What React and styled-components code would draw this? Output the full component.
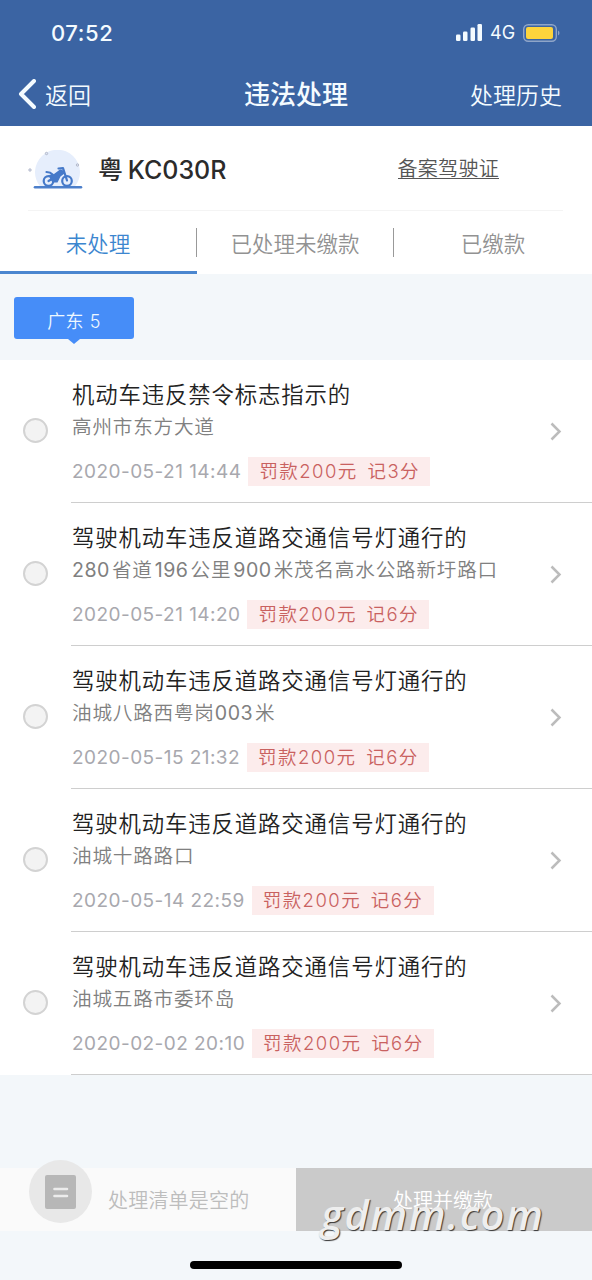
import React from 'react'
import styled, { createGlobalStyle } from 'styled-components'

const GlobalStyle = createGlobalStyle`
    * {
        box-sizing: border-box;
    }

    body {
        margin: 0;
        background: #f3f7fa;
        font-family: Inter, 'Noto Sans CJK SC', sans-serif;
        font-weight: 350;
    }
`

const Screen = styled.div`
    width: 592px;
    height: 1280px;
    display: flex;
    flex-direction: column;
    overflow: hidden;
    white-space: nowrap;
`

const Header = styled.header`
    height: 126px;
    background: #3b64a3;
    color: #f4fbff;
`

const StatusBar = styled.div`
    height: 64px;
    padding: 1px 32px 0 51px;
    display: flex;
    align-items: center;
    justify-content: space-between;
`

const Clock = styled.span`
    font-size: 22px;
    font-weight: 500;
    letter-spacing: 0.6px;
`

const StatusIcons = styled.div`
    display: flex;
    align-items: center;
`

const Network = styled.span`
    margin: 0 7px 0 8px;
    width: 26px;
    font-size: 18px;
    font-weight: 400;
`

const NavBar = styled.nav`
    height: 60px;
    padding: 0 30px 0 18px;
    display: grid;
    grid-template-columns: 1fr auto 1fr;
    align-items: center;
    font-size: 23px;
`

const Back = styled.div`
    display: flex;
    align-items: center;
    gap: 9px;
`

const NavTitle = styled.h1`
    margin: -3px 0 0 12px;
    font-size: 26px;
    font-weight: 500;
`

const History = styled.span`
    text-align: right;
`

const Vehicle = styled.section`
    height: 85px;
    padding: 0 29px 0 28px;
    background: #ffffff;
`

const VehicleRow = styled.div`
    height: 100%;
    padding: 0 64px 0 0;
    display: flex;
    align-items: center;
    border-bottom: 1px solid #f4f4f4;

    svg {
        margin-top: 3px;
    }
`

const Plate = styled.span`
    margin-left: 15px;
    flex: 1;
    font-size: 25px;
    font-weight: 450;
    color: #2b2b2b;
    word-spacing: -2px;
`

const License = styled.a`
    margin-top: 2px;
    font-size: 20px;
    letter-spacing: 0.3px;
    color: #555555;
    border-bottom: 1px solid #555555;
    line-height: 21px;
    height: 20px;
`

const Tabs = styled.div`
    height: 63px;
    display: grid;
    grid-template-columns: 197px 197px 198px;
    background: #ffffff;
`

const Tab = styled.div`
    display: flex;
    align-items: center;
    border-bottom: 3px solid ${props => props.$active ? '#4a86cf' : 'transparent'};
    color: ${props => props.$active ? '#3c86cf' : '#929292'};
    font-size: 21.5px;

    span {
        flex: 1;
        height: 29px;
        line-height: 32px;
        margin-top: 3px;
        text-align: center;
        border-right: 1px solid #999999;
    }

    &:last-child span {
        border-right: 0;
    }
`

const Regions = styled.div`
    height: 86px;
    padding: 23px 14px 0;
`

const Region = styled.div`
    width: 120px;
    height: 42px;
    position: relative;
    border-radius: 3px;
    background: #468df8;
    color: #eef8ff;
    font-size: 18px;
    letter-spacing: 0.5px;
    line-height: 49px;
    text-align: center;

    &::after {
        content: '';
        position: absolute;
        left: 54px;
        top: 42px;
        border: 6px solid transparent;
        border-top: 5px solid #468df8;
        border-bottom: 0;
    }
`

const Row = styled.div`
    height: 143px;
    padding-left: 23px;
    display: flex;
    background: #ffffff;
`

const Radio = styled.span`
    width: 25px;
    height: 25px;
    margin: 58px 23px 0 0;
    border: 2px solid #d3d3d3;
    border-radius: 50%;
    background: #f3f3f3;
`

const RowBody = styled.div`
    flex: 1;
    padding: 20px 30px 0 1px;
    display: flex;
    justify-content: space-between;
    border-bottom: 1px solid #cecece;

    svg {
        margin-top: 42px;
    }
`

const Title = styled.div`
    height: 30px;
    line-height: 30px;
    font-size: 22.4px;
    letter-spacing: 0.87px;
    color: #222222;
`

const Place = styled.div`
    height: 32px;
    line-height: 34px;
    font-size: 19.6px;
    letter-spacing: 0.8px;
    color: #808080;
`

const Digits = styled.span`
    margin: 0 2px;
    font-weight: 400;
    letter-spacing: 0.5px;

    &:first-child {
        margin-left: 0;
    }
`

const Meta = styled.div`
    margin-top: 15px;
    height: 29px;
    display: flex;
    align-items: center;
    gap: 7px;
`

const Time = styled.span`
    font-size: 19px;
    font-weight: 400;
    letter-spacing: 0.45px;
    color: #a8a8ae;
`

const Fine = styled.span`
    width: 182px;
    height: 29px;
    line-height: 29px;
    padding-left: 11px;
    background: #fcecec;
    color: #c9615f;
    font-size: 18.5px;
    letter-spacing: 1.45px;
    word-spacing: 3px;
`

const Footer = styled.footer`
    height: 63px;
    margin-top: 93px;
    display: grid;
    grid-template-columns: 1fr 1fr;
    grid-template-rows: 63px;
    background: #fafafa;
    font-size: 20px;
`

const Basket = styled.div`
    padding: 0 0 0 29px;
    display: flex;
    gap: 16px;
    color: #bdbdbd;
    line-height: 66px;
    letter-spacing: 0.2px;

    svg {
        flex: none;
        margin-top: -8px;
    }
`

const PayButton = styled.div`
    position: relative;
    padding-right: 2px;
    background: #cacaca;
    color: #ffffff;
    line-height: 66px;
    text-align: center;
`

const Watermark = styled.span`
    position: absolute;
    left: 25px;
    top: 21px;
    line-height: 50px;
    font-family: 'Open Sans', sans-serif;
    font-size: 41.5px;
    font-style: italic;
    font-weight: 600;
    letter-spacing: 1.5px;
    color: #eeeeee;
    text-shadow: 1px 1px 1px #333333;
`

const HomeIndicator = styled.div`
    width: 212px;
    height: 8px;
    margin: 30px 0 0 190px;
    border-radius: 4px;
    background: #000000;
`

const Signal = () => (
    <svg width='27' height='17' viewBox='0 0 27 17' fill='#f4fbff'>
        <rect x='1' y='10.5' width='4.5' height='6.5' rx='1.3' />
        <rect x='8' y='7.5' width='4.5' height='9.5' rx='1.3' />
        <rect x='15.5' y='3.5' width='4.5' height='13.5' rx='1.3' />
        <rect x='22.5' y='0' width='4.5' height='17' rx='1.3' />
    </svg>
)

const Battery = () => (
    <svg width='37' height='18' viewBox='0 0 37 18'>
        <rect x='0.7' y='0.7' width='32.6' height='16.6' rx='4.5' fill='none' stroke='#8fa5c8' strokeWidth='1.4' />
        <rect x='3' y='3' width='27' height='12' rx='2' fill='#fdd43c' />
        <path d='M35 6.5v5q1.5-.8 1.5-2.5T35 6.5' fill='#8fa5c8' />
    </svg>
)

const BackArrow = () => (
    <svg width='18' height='30' viewBox='0 0 18 30' fill='none' stroke='#f4fbff' strokeWidth='4' strokeLinecap='round' strokeLinejoin='round'>
        <path d='M16 2 3 15l13 13' />
    </svg>
)

const Chevron = () => (
    <svg width='12' height='19' viewBox='0 0 12 19' fill='none' stroke='#bcbcbc' strokeWidth='2.5'>
        <path d='m1.5 1.5 8 8-8 8' />
    </svg>
)

const Motorcycle = () => (
    <svg width='55' height='40' viewBox='0 0 55 40' fill='none'>
        <path d='M12.5 37a22.5 22.5 0 1 1 34 0z' fill='#e6eefc' />
        <g fill='#dfe5f3' stroke='#b3b9cb'>
            <circle cx='18.5' cy='3.5' r='1.2' />
            <circle cx='2' cy='20' r='1.2' />
            <circle cx='49.5' cy='15' r='1.2' />
        </g>
        <path d='M7 37.2h46' stroke='#4c7fcb' strokeWidth='2.6' strokeLinecap='round' />
        <g stroke='#4579c9' strokeWidth='2.2' strokeLinecap='round' strokeLinejoin='round'>
            <circle cx='20.5' cy='31' r='4.8' />
            <circle cx='39' cy='31' r='4.8' />
            <path d='m30.500 18.5 4.500-.3 4 12.3M20.500 31l6-3.500M18.500 22q4 .2 6 2.500' />
        </g>
        <path d='m21 25 5-1 6-4.500 3.500 1 1 3-4 3-3 6h-5l-2.500-4z' fill='#4579c9' />
    </svg>
)

const ListIcon = () => (
    <svg width='63' height='63' viewBox='0 0 63 63'>
        <circle cx='31.5' cy='31.5' r='31.5' fill='#e8e8e8' />
        <rect x='16' y='15' width='31' height='34' rx='2' fill='#b7b7b7' />
        <path d='M25.5 29H38M25.5 36H38' stroke='#ececec' strokeWidth='2.6' strokeLinecap='round' />
    </svg>
)

const signalTitle = '驾驶机动车违反道路交通信号灯通行的'

const violations = [
    { title: '机动车违反禁令标志指示的', place: '高州市东方大道', time: '2020-05-21 14:44', points: 3 },
    { title: signalTitle, place: '280省道196公里900米茂名高水公路新圩路口', time: '2020-05-21 14:20', points: 6 },
    { title: signalTitle, place: '油城八路西粤岗003米', time: '2020-05-15 21:32', points: 6 },
    { title: signalTitle, place: '油城十路路口', time: '2020-05-14 22:59', points: 6 },
    { title: signalTitle, place: '油城五路市委环岛', time: '2020-02-02 20:10', points: 6 }
]

// a little air around the numbers inside an address
const spaceDigits = text => text.split(/(\d+)/).map((part, i) => (
    /\d/.test(part) ? <Digits key={i}>{part}</Digits> : part
))

const Violation = ({ title, place, time, points }) => (
    <Row>
        <Radio />
        <RowBody>
            <div>
                <Title>{title}</Title>
                <Place>{spaceDigits(place)}</Place>
                <Meta>
                    <Time>{time}</Time>
                    <Fine>罚款200元 记{points}分</Fine>
                </Meta>
            </div>
            <Chevron />
        </RowBody>
    </Row>
)

const App = () => (
    <Screen>
        <GlobalStyle />
        <Header>
            <StatusBar>
                <Clock>07:52</Clock>
                <StatusIcons>
                    <Signal />
                    <Network>4G</Network>
                    <Battery />
                </StatusIcons>
            </StatusBar>
            <NavBar>
                <Back><BackArrow />返回</Back>
                <NavTitle>违法处理</NavTitle>
                <History>处理历史</History>
            </NavBar>
        </Header>
        <Vehicle>
            <VehicleRow>
                <Motorcycle />
                <Plate>粤 KC030R</Plate>
                <License>备案驾驶证</License>
            </VehicleRow>
        </Vehicle>
        <Tabs>
            <Tab $active><span>未处理</span></Tab>
            <Tab><span>已处理未缴款</span></Tab>
            <Tab><span>已缴款</span></Tab>
        </Tabs>
        <Regions>
            <Region>广东 5</Region>
        </Regions>
        <main>
            {violations.map(item => <Violation key={item.time} {...item} />)}
        </main>
        <Footer>
            <Basket><ListIcon />处理清单是空的</Basket>
            <PayButton>
                处理并缴款
                <Watermark>gdmm.com</Watermark>
            </PayButton>
        </Footer>
        <HomeIndicator />
    </Screen>
)

export default App
